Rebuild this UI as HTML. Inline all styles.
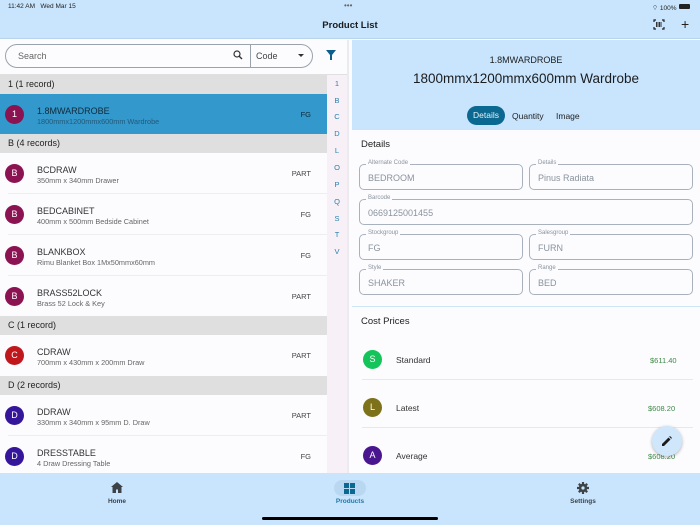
<!DOCTYPE html>
<html><head><meta charset="utf-8"><style>
*{margin:0;padding:0;box-sizing:border-box}
body{width:700px;height:525px;overflow:hidden;position:relative;background:#fcfcff;font-family:"Liberation Sans",sans-serif;color:#1a1c1e}
.a{position:absolute}
.top{left:0;top:0;width:700px;height:39px;background:#c9e5fd;border-bottom:1px solid #b9d3ea}
.hdr{left:0;width:327px;height:19px;background:#dfdfe0;font-size:9px;padding-left:8px;line-height:19px;color:#222}
.row{left:0;width:327px;height:41px;background:#fcfcff}
.row .av{position:absolute;left:5px;top:11px;width:19px;height:19px;border-radius:50%;color:#fff;font-size:9px;text-align:center;line-height:19px}
.row .t{position:absolute;left:37px;top:12px;font-size:9px;color:#333}
.row .s{position:absolute;left:37px;top:23px;font-size:7.3px;color:#666}
.row .r{position:absolute;right:16px;top:16px;font-size:7.5px;color:#444}
.row .ln{position:absolute;left:8px;right:0;bottom:0;height:1px;background:#eceef2}
.idx{left:327px;top:75px;width:20px;height:398px;background:#f7f1f7}
.idx div{position:absolute;left:0;width:20px;text-align:center;font-size:7.5px;color:#2a7fb0}
.fld{border:1px solid #a9b2bc;border-radius:5px;height:26px;font-size:9px;color:#8a939c;padding:8px 0 0 8px}
.fld span{position:absolute;top:-5px;left:6px;background:#fcfcff;font-size:6px;color:#8a939c;padding:0 2px}
.cp{left:363px;width:19px;height:19px;border-radius:50%;color:#fff;font-size:9px;text-align:center;line-height:19px}
</style></head><body>
<div class="a top"></div>
<div class="a" style="left:8px;top:3px;font-size:6.5px;color:#222">11:42 AM&nbsp;&nbsp;&nbsp;Wed Mar 15</div>
<div class="a" style="left:344px;top:1px;font-size:8px;color:#666">•••</div>
<div class="a" style="left:652px;top:3px;font-size:6.5px;color:#222">⌔ 100%</div>
<div class="a" style="left:679px;top:4px;width:11px;height:5px;background:#222;border-radius:1px"></div>
<div class="a" style="left:0;top:20px;width:700px;text-align:center;font-size:9.5px;font-weight:bold;color:#1a1c1e">Product List</div>
<svg class="a" style="left:653px;top:19px" width="12" height="11" viewBox="0 0 12 11"><path d="M1 3V1h2M9 1h2v2M11 8v2H9M3 10H1V8" fill="none" stroke="#222" stroke-width="1.2"/><path d="M3.5 3v5M5 3v5M6.5 3v5M8 3v5" stroke="#222" stroke-width="0.9"/></svg>
<div class="a" style="left:681px;top:16px;font-size:14px;color:#222">+</div>

<div class="a" style="left:0;top:40px;width:347px;height:35px;background:#fcfcff;border-bottom:1px solid #e0e0e0"></div>
<div class="a" style="left:5px;top:44px;width:308px;height:24px;border:1px solid #9aa3ab;border-radius:12px"></div>
<div class="a" style="left:18px;top:51px;font-size:9px;color:#666">Search</div>
<svg class="a" style="left:233px;top:50px" width="10" height="10" viewBox="0 0 10 10"><circle cx="4" cy="4" r="3" fill="none" stroke="#333" stroke-width="1.2"/><path d="M6.2 6.2L9 9" stroke="#333" stroke-width="1.4"/></svg>
<div class="a" style="left:250px;top:45px;width:1px;height:22px;background:#9aa3ab"></div>
<div class="a" style="left:256px;top:51px;font-size:9px;color:#444">Code</div>
<div class="a" style="left:298px;top:54px;border:3px solid transparent;border-top:3.5px solid #333"></div>
<svg class="a" style="left:326px;top:50px" width="10" height="10" viewBox="0 0 10 10"><path d="M0 0h10L6 5v5H4V5z" fill="#0d5f8a"/></svg>

<div class="a hdr" style="top:75px">1 (1 record)</div>
<div class="a row" style="top:94px;height:40px;background:#3398cb"><div class="av" style="background:#8c1352">1</div><div class="t" style="color:#102a3a">1.8MWARDROBE</div><div class="s" style="color:#24597a">1800mmx1200mmx600mm Wardrobe</div><div class="r" style="color:#102a3a">FG</div></div>
<div class="a hdr" style="top:134px">B (4 records)</div>
<div class="a row" style="top:153px"><div class="av" style="background:#8c1352">B</div><div class="t">BCDRAW</div><div class="s">350mm x 340mm Drawer</div><div class="r">PART</div><div class="ln"></div></div>
<div class="a row" style="top:194px"><div class="av" style="background:#8c1352">B</div><div class="t">BEDCABINET</div><div class="s">400mm x 500mm Bedside Cabinet</div><div class="r">FG</div><div class="ln"></div></div>
<div class="a row" style="top:235px"><div class="av" style="background:#8c1352">B</div><div class="t">BLANKBOX</div><div class="s">Rimu Blanket Box 1Mx50mmx60mm</div><div class="r">FG</div><div class="ln"></div></div>
<div class="a row" style="top:276px;height:40px"><div class="av" style="background:#8c1352">B</div><div class="t">BRASS52LOCK</div><div class="s">Brass 52 Lock &amp; Key</div><div class="r">PART</div></div>
<div class="a hdr" style="top:316px">C (1 record)</div>
<div class="a row" style="top:335px"><div class="av" style="background:#c0171c">C</div><div class="t">CDRAW</div><div class="s">700mm x 430mm x 200mm Draw</div><div class="r">PART</div></div>
<div class="a hdr" style="top:376px">D (2 records)</div>
<div class="a row" style="top:395px"><div class="av" style="background:#35169a">D</div><div class="t">DDRAW</div><div class="s">330mm x 340mm x 95mm D. Draw</div><div class="r">PART</div><div class="ln"></div></div>
<div class="a row" style="top:436px;height:37px"><div class="av" style="background:#35169a">D</div><div class="t">DRESSTABLE</div><div class="s">4 Draw Dressing Table</div><div class="r">FG</div></div>

<div class="a idx">
<div style="top:4px">1</div><div style="top:21px">B</div><div style="top:37px">C</div><div style="top:54px">D</div><div style="top:71px">L</div><div style="top:88px">O</div><div style="top:105px">P</div><div style="top:122px">Q</div><div style="top:139px">S</div><div style="top:155px">T</div><div style="top:172px">V</div>
</div>
<div class="a" style="left:347px;top:40px;width:2px;height:433px;background:#ebebef"></div>

<div class="a" style="left:352px;top:40px;width:348px;height:90px;background:#c9e5fd"></div>
<div class="a" style="left:352px;top:55px;width:348px;text-align:center;font-size:9px;color:#1a1c1e">1.8MWARDROBE</div>
<div class="a" style="left:352px;top:71px;width:348px;text-align:center;font-size:13.5px;color:#1a1c1e">1800mmx1200mmx600mm Wardrobe</div>
<div class="a" style="left:467px;top:106px;width:38px;height:19px;border-radius:10px;background:#0b6890;color:#e5f2fa;font-size:8.5px;text-align:center;line-height:19px">Details</div>
<div class="a" style="left:512px;top:111px;font-size:8.5px;color:#222">Quantity</div>
<div class="a" style="left:556px;top:111px;font-size:8.5px;color:#222">Image</div>

<div class="a" style="left:361px;top:139px;font-size:9.5px;color:#222">Details</div>
<div class="a fld" style="left:359px;top:164px;width:164px"><span>Alternate Code</span>BEDROOM</div>
<div class="a fld" style="left:529px;top:164px;width:164px"><span>Details</span>Pinus Radiata</div>
<div class="a fld" style="left:359px;top:199px;width:334px"><span>Barcode</span>0669125001455</div>
<div class="a fld" style="left:359px;top:234px;width:164px"><span>Stockgroup</span>FG</div>
<div class="a fld" style="left:529px;top:234px;width:164px"><span>Salesgroup</span>FURN</div>
<div class="a fld" style="left:359px;top:269px;width:164px"><span>Style</span>SHAKER</div>
<div class="a fld" style="left:529px;top:269px;width:164px"><span>Range</span>BED</div>
<div class="a" style="left:352px;top:306px;width:348px;height:1px;background:#cfe5f8"></div>

<div class="a" style="left:361px;top:316px;font-size:9.5px;color:#222">Cost Prices</div>
<div class="a cp" style="top:350px;background:#12c45a">S</div>
<div class="a" style="left:396px;top:355px;font-size:8.5px;color:#333">Standard</div>
<div class="a" style="left:650px;top:356px;font-size:7.5px;color:#3d8a45">$611.40</div>
<div class="a" style="left:362px;top:379px;width:331px;height:1px;background:#e6e8ec"></div>
<div class="a cp" style="top:398px;background:#7d721a">L</div>
<div class="a" style="left:396px;top:403px;font-size:8.5px;color:#333">Latest</div>
<div class="a" style="left:648px;top:404px;font-size:7.5px;color:#3d8a45">$608.20</div>
<div class="a" style="left:362px;top:427px;width:331px;height:1px;background:#e6e8ec"></div>
<div class="a cp" style="top:446px;background:#4a1690">A</div>
<div class="a" style="left:396px;top:451px;font-size:8.5px;color:#333">Average</div>
<div class="a" style="left:648px;top:452px;font-size:7.5px;color:#3d8a45">$608.20</div>
<div class="a" style="left:652px;top:426px;width:30px;height:30px;border-radius:50%;background:#cfe6fb;box-shadow:0 1px 3px rgba(0,0,0,.3)"></div>
<svg class="a" style="left:662px;top:436px" width="10" height="10" viewBox="0 0 10 10"><path d="M0 10V8L6.5 1.5 8.5 3.5 2 10zM7.2 0.8L8 0 10 2 9.2 2.8z" fill="#1a1c1e"/></svg>

<div class="a" style="left:0;top:473px;width:700px;height:52px;background:#c9e5fd"></div>
<svg class="a" style="left:111px;top:482px" width="12" height="11" viewBox="0 0 12 11"><path d="M6 0L0 5h1.5v6h3.5V7.5h2V11h3.5V5H12z" fill="#3d4247"/></svg>
<div class="a" style="left:97px;top:498px;width:40px;text-align:center;font-size:6.5px;font-weight:bold;color:#3d4247">Home</div>
<div class="a" style="left:334px;top:480px;width:32px;height:16px;border-radius:8px;background:#b9d7f0"></div>
<svg class="a" style="left:344px;top:483px" width="11" height="11" viewBox="0 0 11 11"><rect x="0" y="0" width="5" height="5" fill="#0b6890"/><rect x="6" y="0" width="5" height="5" fill="#0b6890"/><rect x="0" y="6" width="5" height="5" fill="#0b6890"/><rect x="6" y="6" width="5" height="5" fill="#0b6890"/></svg>
<div class="a" style="left:325px;top:498px;width:50px;text-align:center;font-size:6.5px;font-weight:bold;color:#1f78a8">Products</div>
<svg class="a" style="left:577px;top:482px" width="12" height="12" viewBox="0 0 12 12"><circle cx="6" cy="6" r="4.2" fill="#3d4247"/><g stroke="#3d4247" stroke-width="2.2"><path d="M6 0v12M0 6h12M1.8 1.8l8.4 8.4M10.2 1.8l-8.4 8.4"/></g><circle cx="6" cy="6" r="1.6" fill="#c9e5fd"/></svg>
<div class="a" style="left:558px;top:498px;width:50px;text-align:center;font-size:6.5px;font-weight:bold;color:#3d4247">Settings</div>
<div class="a" style="left:262px;top:517px;width:176px;height:3px;border-radius:2px;background:#000"></div>
</body></html>
